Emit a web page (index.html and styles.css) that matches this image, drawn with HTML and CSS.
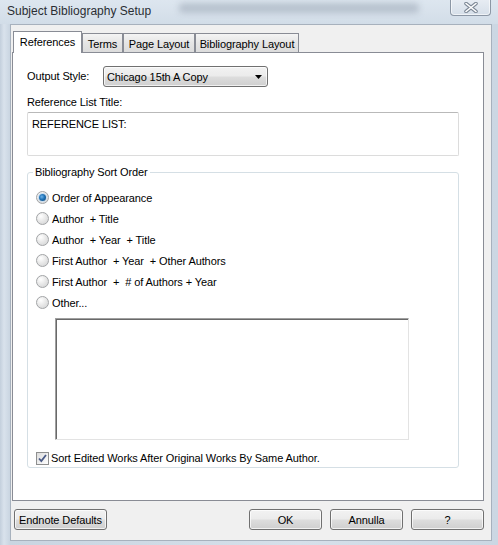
FILE: index.html
```html
<!DOCTYPE html>
<html>
<head>
<meta charset="utf-8">
<title>Subject Bibliography Setup</title>
<link rel="stylesheet" href="styles.css">
</head>
<body>
<div class="window">
  <div class="titlebar">
    <span class="title">Subject Bibliography Setup</span>
    <span class="smudge"></span>
    <span class="close">
      <svg width="14" height="11" viewBox="0 0 14 11">
        <path d="M2 1.5 L12 9.5 M12 1.5 L2 9.5" stroke="#7d8896" stroke-width="3.6" stroke-linecap="round" fill="none"/>
        <path d="M2 1.5 L12 9.5 M12 1.5 L2 9.5" stroke="#ffffff" stroke-width="1.6" stroke-linecap="round" fill="none"/>
      </svg>
    </span>
  </div>
  <div class="client">
    <div class="tabs">
      <div class="tab active tab-ref">References</div>
      <div class="tab tab-terms">Terms</div>
      <div class="tab tab-page">Page Layout</div>
      <div class="tab tab-bib">Bibliography Layout</div>
    </div>
    <div class="page">
      <div class="style-row">
        <span class="style-label">Output Style:</span>
        <div class="select">
          <span>Chicago 15th A Copy</span>
          <svg class="arrow" width="7" height="4" viewBox="0 0 7 4"><path d="M0 0 H7 L3.5 4 Z" fill="#000"/></svg>
        </div>
      </div>
      <div class="label">Reference List Title:</div>
      <div class="textbox">REFERENCE LIST:</div>
      <fieldset class="group">
        <legend>Bibliography Sort Order</legend>
        <div class="opt first"><span class="radio checked"></span>Order of Appearance</div>
        <div class="opt"><span class="radio"></span>Author&nbsp; + Title</div>
        <div class="opt"><span class="radio"></span>Author&nbsp; + Year&nbsp; + Title</div>
        <div class="opt"><span class="radio"></span>First Author&nbsp; + Year&nbsp; + Other Authors</div>
        <div class="opt"><span class="radio"></span>First Author&nbsp; +&nbsp; # of Authors + Year</div>
        <div class="opt"><span class="radio"></span>Other...</div>
        <div class="other-box"></div>
        <div class="check-row">
          <span class="check">
            <svg width="11" height="11" viewBox="0 0 11 11"><path d="M2 5.5 L4.3 8 L9 2" stroke="#4a5a86" stroke-width="1.8" fill="none"/></svg>
          </span>Sort Edited Works After Original Works By Same Author.
        </div>
      </fieldset>
    </div>
    <div class="buttons">
      <div class="btn btn-defaults">Endnote Defaults</div>
      <div class="btn btn-std btn-ok">OK</div>
      <div class="btn btn-std">Annulla</div>
      <div class="btn btn-std">?</div>
    </div>
  </div>
</div>
</body>
</html>
```
FILE: styles.css
```css
* { box-sizing: border-box; }
html, body { margin: 0; padding: 0; }
body {
  width: 498px;
  height: 545px;
  overflow: hidden;
  font-family: "Liberation Sans", Arial, sans-serif;
  font-size: 11px;
  letter-spacing: -0.1px;
  color: #000;
}
.window {
  width: 498px;
  height: 545px;
  background: linear-gradient(to right, #c3cfdc 0px, #d9e2ec 4px, #c9d5e1 10px, #d6e0ea 60%, #cbd7e3 100%);
}
.titlebar {
  height: 24px;
  display: flex;
  align-items: flex-start;
  background: linear-gradient(to bottom, #dde6ef, #d2dde8);
}
.title {
  margin: 3px 0 0 7px;
  font-size: 12px;
  letter-spacing: 0;
  line-height: 16px;
  color: #2a2e33;
}
.smudge {
  margin: 3px 0 0 28px;
  width: 240px;
  height: 10px;
  background: rgba(120, 132, 150, 0.35);
  filter: blur(3px);
  border-radius: 4px;
}
.close {
  margin-left: auto;
  margin-right: 7px;
  margin-top: -2px;
  width: 41px;
  height: 18px;
  border: 1px solid #8c97a5;
  border-top: none;
  border-radius: 0 0 4px 4px;
  background: linear-gradient(to bottom, #e9eef4, #d6dfe9);
  box-shadow: inset 0 0 0 1px rgba(255,255,255,0.6);
  display: flex;
  align-items: center;
  justify-content: center;
  padding-top: 2px;
}
.client {
  margin-left: 10px;
  width: 482px;
  height: 517px;
  border: 1px solid #a7b1bd;
  background: #f0f0f0;
  padding: 6px 0 0 1px;
}
.tabs {
  display: flex;
  align-items: flex-end;
  height: 21px;
  padding-left: 1px;
  position: relative;
  z-index: 1;
}
.tab {
  height: 19px;
  border: 1px solid #898c95;
  border-bottom: none;
  background: linear-gradient(to bottom, #f4f4f4, #e5e5e5 50%, #dcdcdc);
  display: flex;
  align-items: center;
  justify-content: center;
  line-height: 14px;
  padding-top: 1px;
}
.tab.active {
  height: 22px;
  margin-bottom: -1px;
  background: #fff;
  padding-top: 0;
  padding-bottom: 1px;
}
.tab-ref { width: 69px; }
.tab-terms { width: 41px; }
.tab-page { width: 72px; }
.tab-bib { width: 104px; }
.page {
  width: 472px;
  height: 449px;
  border: 1px solid #898c95;
  background: #fff;
  padding: 13px 0 0 14px;
}
.style-row {
  display: flex;
  align-items: center;
  height: 21px;
}
.style-label {
  width: 76px;
  margin-top: -2px;
}
.select {
  width: 165px;
  height: 21px;
  border: 1px solid #707070;
  border-radius: 3px;
  background: linear-gradient(to bottom, #f2f2f2 0%, #ebebeb 48%, #dddddd 52%, #cfcfcf 100%);
  box-shadow: inset 0 0 0 1px rgba(255,255,255,0.7);
  display: flex;
  align-items: center;
  justify-content: space-between;
  padding: 0 5px 0 3px;
}
.label {
  margin-top: 7px;
  line-height: 16px;
}
.textbox {
  margin-top: 2px;
  width: 432px;
  height: 44px;
  border: 1px solid #dcdcdc;
  border-top-color: #b9b9b9;
  border-radius: 2px;
  padding: 3px 4px;
  line-height: 16px;
}
.group {
  margin: 8px 0 0 0;
  width: 432px;
  border: 1px solid #d5dfe5;
  border-radius: 3px;
  padding: 0 8px 1px 7px;
  min-width: 0;
}
.group legend {
  padding: 0 2px;
  margin-left: -2px;
  line-height: 16px;
}
.opt {
  height: 21px;
  display: flex;
  align-items: center;
}
.opt.first { margin-top: 7px; }
.radio {
  width: 13px;
  height: 13px;
  margin: 0 3px 0 1px;
  border-radius: 50%;
  border: 1px solid #a2a4a6;
  background: radial-gradient(circle at 35% 30%, #ffffff 0, #e9e9e9 45%, #cfd0d1 100%);
  display: inline-flex;
  align-items: center;
  justify-content: center;
}
.radio.checked::after {
  content: "";
  width: 7px;
  height: 7px;
  border-radius: 50%;
  background: radial-gradient(circle at 40% 40%, #6fb2e8 0, #1f73b7 45%, #0b3f6f 100%);
  box-shadow: 0 0 0 1px #c9dcee;
}
.other-box {
  margin: 5px 0 0 20px;
  width: 354px;
  height: 122px;
  border: 1px solid;
  border-color: #a0a0a0 #e3e3e3 #e3e3e3 #a0a0a0;
  box-shadow: inset 1px 1px 0 #696969;
  background: #fff;
}
.check-row {
  margin-top: 10px;
  height: 16px;
  display: flex;
  align-items: center;
}
.check {
  width: 13px;
  height: 13px;
  margin: 0 2px 0 1px;
  border: 1px solid #8e8f8f;
  background: linear-gradient(135deg, #dcdcdc, #ffffff);
  display: inline-flex;
  align-items: center;
  justify-content: center;
}
.buttons {
  display: flex;
  margin-top: 8px;
  padding-left: 2px;
}
.btn {
  height: 21px;
  border: 1px solid #707070;
  border-radius: 3px;
  background: linear-gradient(to bottom, #f2f2f2 0%, #ebebeb 48%, #dddddd 52%, #cfcfcf 100%);
  box-shadow: inset 0 0 0 1px rgba(255,255,255,0.7);
  display: flex;
  align-items: center;
  justify-content: center;
}
.btn-defaults {
  width: 93px;
}
.btn-std {
  width: 73px;
  margin-left: 8px;
}
.btn-ok {
  margin-left: auto;
  margin-right: 0;
}
.buttons .btn-std:last-child {
  margin-right: 7px;
}
```
